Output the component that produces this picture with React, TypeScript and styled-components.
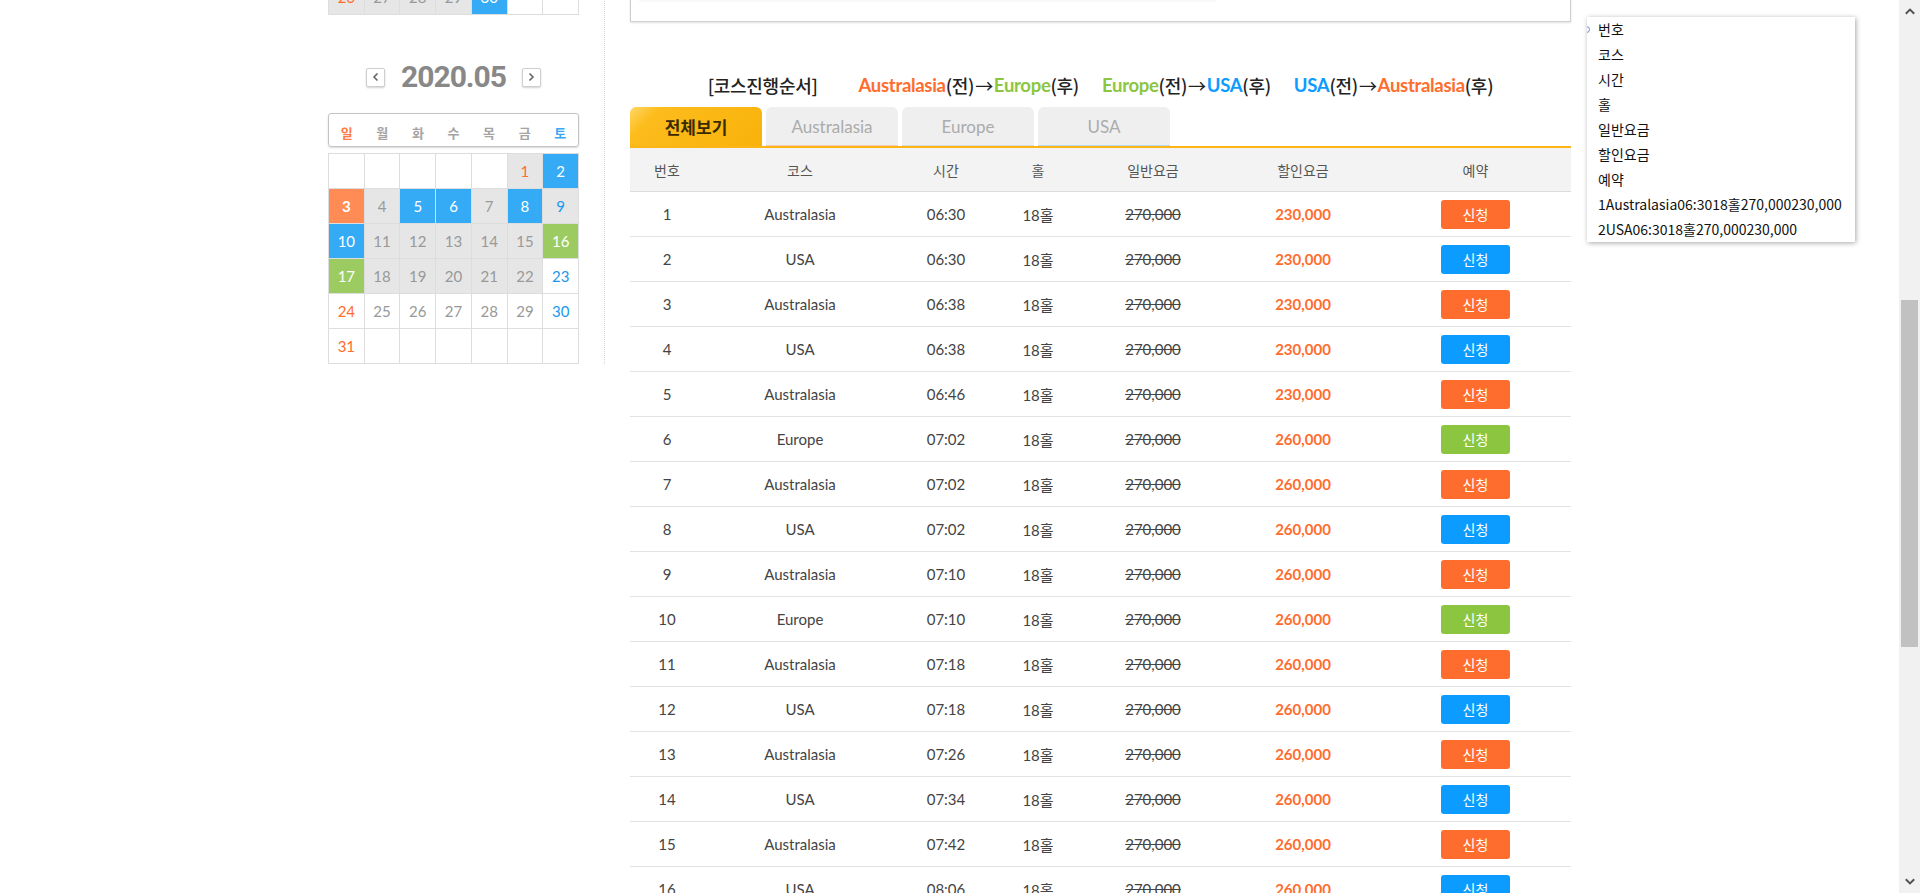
import React from 'react'
import styled, { createGlobalStyle, css } from 'styled-components'

const GlobalStyle = createGlobalStyle`
  html, body {
    margin: 0;
    padding: 0;
    background: #fff;
    overflow: hidden;
  }
  body {
    font-family: Lato, "Noto Sans CJK KR", sans-serif;
    color: #333;
  }
`

const KR = `"Noto Sans CJK KR", "Noto Sans", sans-serif`

type Bg = 'white' | 'gray' | 'blue' | 'orange' | 'green'
type Tone = 'sun' | 'sat' | 'muted' | 'light'
type Course = 'Australasia' | 'USA' | 'Europe'

const bgColors: Record<Bg, string> = {
  white: '#fff',
  gray: '#e6e6e6',
  blue: '#35abf6',
  orange: '#ff8b55',
  green: '#9ccb62',
}

const toneColors: Record<Tone, string> = {
  sun: '#ff6c2c',
  sat: '#1a98f0',
  muted: '#999',
  light: '#fff',
}

const courseColors: Record<Course, string> = {
  Australasia: '#ff6d2e',
  USA: '#0c9cff',
  Europe: '#8cc640',
}

const S = {
  Screen: styled.div`
    display: flex;
    height: 893px;
    overflow: hidden;
  `,

  Viewport: styled.div`
    flex: 1;
    position: relative;
    overflow: hidden;
  `,

  Container: styled.div`
    width: 1243px;
    margin: -21px auto 0;
    display: flex;
    align-items: flex-start;
  `,

  LeftCol: styled.div`
    width: 251px;
    padding-right: 25px;
    border-right: 1px dotted #d4d4d4;
  `,

  CalGrid: styled.div`
    display: grid;
    grid-template-columns: repeat(7, 1fr);
    grid-auto-rows: 34px;
    gap: 1px;
    background: #ddd;
    border: 1px solid #ddd;
  `,

  Cell: styled.div<{ $bg: Bg; $tone: Tone; $bold?: boolean }>`
    display: flex;
    align-items: center;
    justify-content: center;
    background: ${p => bgColors[p.$bg]};
    color: ${p => toneColors[p.$tone]};
    font-family: Lato, sans-serif;
    font-size: 15px;
    font-weight: ${p => (p.$bold ? 700 : 400)};
  `,

  MonthNav: styled.div`
    margin-top: 47px;
    height: 30px;
    display: flex;
    align-items: center;
    justify-content: center;
    gap: 16px;
  `,

  NavBtn: styled.div`
    width: 17px;
    height: 17px;
    border: 1px solid #cfcfcf;
    border-radius: 2px;
    background: #fff;
    box-shadow: 0 1px 2px rgba(0, 0, 0, 0.18);
    display: flex;
    align-items: center;
    justify-content: center;
  `,

  MonthTitle: styled.div`
    font-family: Roboto, sans-serif;
    font-weight: 700;
    font-size: 30px;
    letter-spacing: -1px;
    color: #888;
    line-height: 30px;
  `,

  WeekHead: styled.div`
    margin-top: 21px;
    margin-bottom: 6px;
    height: 34px;
    box-sizing: border-box;
    padding-top: 4px;
    border: 1px solid #c4c4c4;
    border-radius: 3px;
    box-shadow: 0 1px 2px rgba(0, 0, 0, 0.15);
    display: grid;
    grid-template-columns: repeat(7, 1fr);
    align-items: center;
  `,

  WeekDay: styled.div<{ $tone: Tone }>`
    text-align: center;
    font-family: ${KR};
    font-size: 13px;
    font-weight: 700;
    color: ${p => (p.$tone === 'sun' ? '#ff7a45' : p.$tone === 'sat' ? '#3aa8f4' : '#a4a4a4')};
  `,

  RightCol: styled.div`
    width: 941px;
    margin-left: 25px;
  `,

  TopBox: styled.div`
    height: 43px;
    box-sizing: border-box;
    border: 1px solid #cfcfcf;
    border-top: none;
    box-shadow: 0 1px 2px rgba(0, 0, 0, 0.12);
    padding: 0 0 0 8px;
  `,

  TopInner: styled.div`
    width: 577px;
    height: 20px;
    box-shadow: 0 2px 3px rgba(0, 0, 0, 0.05);
  `,

  OrderLine: styled.div`
    margin-top: 50px;
    height: 26px;
    display: flex;
    justify-content: center;
    align-items: center;
    gap: 23px;
    font-family: ${KR};
    font-size: 18px;
    font-weight: 500;
    letter-spacing: -0.3px;
    color: #222;
    white-space: nowrap;
  `,

  OrderTitle: styled.span`
    margin-right: 18px;
  `,

  Flow: styled.span`
    display: inline-flex;
    align-items: center;
  `,

  CourseName: styled.b<{ $course: Course }>`
    font-family: Lato, sans-serif;
    font-weight: 700;
    font-size: 18.5px;
    letter-spacing: -0.3px;
    color: ${p => courseColors[p.$course]};
  `,

  Arrow: styled.span`
    margin: 0 1px;
    font-weight: 400;
  `,

  Tabs: styled.div`
    margin-top: 9px;
    display: flex;
    gap: 4px;
    border-bottom: 2px solid #fdb515;
  `,

  Tab: styled.div<{ $active?: boolean; $accent?: string }>`
    width: 132px;
    height: 39px;
    box-sizing: border-box;
    border-radius: 6px 6px 0 0;
    display: flex;
    align-items: center;
    justify-content: center;
    font-size: 17px;
    ${p =>
      p.$active
        ? css`
            background: linear-gradient(135deg, #ffd866 0%, #fcbc1c 18%, #f9b20a 100%);
            color: #3a2a00;
            font-family: ${KR};
            font-weight: 700;
          `
        : css`
            background: #efefef;
            color: #ababab;
            font-family: Lato, sans-serif;
            border-bottom: 1px solid ${p.$accent || '#e0e0e0'};
          `}
  `,

  HeadRow: styled.div`
    display: grid;
    grid-template-columns: 74px 192px 100px 84px 146px 154px 1fr;
    height: 44px;
    box-sizing: border-box;
    align-items: center;
    background: #f3f3f3;
    border-bottom: 1px solid #dcdcdc;
    font-family: ${KR};
    font-size: 14px;
    color: #555;
    text-align: center;
  `,

  Row: styled.div`
    display: grid;
    grid-template-columns: 74px 192px 100px 84px 146px 154px 1fr;
    height: 45px;
    box-sizing: border-box;
    align-items: center;
    border-bottom: 1px solid #e2e2e2;
    font-family: Lato, ${KR};
    font-size: 15px;
    color: #444;
    text-align: center;
  `,

  Hole: styled.span`
    font-family: Lato, ${KR};
  `,

  OldPrice: styled.span`
    text-decoration: line-through;
  `,

  Price: styled.span`
    color: #ff6d2e;
    font-weight: 700;
  `,

  BookCell: styled.div`
    display: flex;
    justify-content: center;
  `,

  BookBtn: styled.div<{ $course: Course }>`
    width: 69px;
    height: 29px;
    border-radius: 3px;
    background: ${p => courseColors[p.$course]};
    color: #fff;
    font-family: ${KR};
    font-size: 14px;
    display: flex;
    align-items: center;
    justify-content: center;
  `,

  Popup: styled.div`
    position: absolute;
    left: 1587px;
    top: 17px;
    width: 268px;
    background: #fff;
    box-shadow: 1px 1px 5px rgba(0, 0, 0, 0.35);
    font-family: ${KR};
    font-size: 14px;
    color: #111;
    overflow: hidden;
  `,

  PopItem: styled.div<{ $marker?: boolean }>`
    position: relative;
    height: 25px;
    line-height: 25px;
    padding-left: 11px;
    white-space: nowrap;
    ${p =>
      p.$marker &&
      css`
        &::before {
          content: '';
          position: absolute;
          left: -4px;
          top: 9px;
          width: 5px;
          height: 5px;
          border: 1px solid #6b86d8;
          border-radius: 50%;
        }
      `}
  `,

  ScrollBar: styled.div`
    width: 21px;
    background: #f1f1f1;
    display: flex;
    flex-direction: column;
    align-items: center;
  `,

  ScrollArrow: styled.div`
    height: 24px;
    display: flex;
    align-items: center;
    justify-content: center;
  `,

  ScrollTrack: styled.div`
    flex: 1;
    width: 100%;
    padding: 276px 2px 0;
    box-sizing: border-box;
  `,

  Thumb: styled.div`
    height: 347px;
    background: #c1c1c1;
  `,
}

type Day = { d: number; bg: Bg; tone?: Tone; bold?: boolean } | null

const g = (d: number, tone: Tone = 'muted'): Day => ({ d, bg: 'gray', tone })
const w = (d: number, tone: Tone = 'muted'): Day => ({ d, bg: 'white', tone })
const c = (d: number, bg: Bg, bold = false): Day => ({ d, bg, tone: 'light', bold })

const aprilTail: Day[] = [g(26, 'sun'), g(27), g(28), g(29), c(30, 'blue'), null, null]

const may: Day[] = [
  null, null, null, null, null, g(1, 'sun'), c(2, 'blue'),
  c(3, 'orange', true), g(4), c(5, 'blue'), c(6, 'blue'), g(7), c(8, 'blue'), g(9, 'sat'),
  c(10, 'blue'), g(11), g(12), g(13), g(14), g(15), c(16, 'green'),
  c(17, 'green'), g(18), g(19), g(20), g(21), g(22), w(23, 'sat'),
  w(24, 'sun'), w(25), w(26), w(27), w(28), w(29), w(30, 'sat'),
  w(31, 'sun'), null, null, null, null, null, null,
]

const weekDays: { label: string; tone: Tone }[] = [
  { label: '일', tone: 'sun' },
  { label: '월', tone: 'muted' },
  { label: '화', tone: 'muted' },
  { label: '수', tone: 'muted' },
  { label: '목', tone: 'muted' },
  { label: '금', tone: 'muted' },
  { label: '토', tone: 'sat' },
]

const tee: [Course, string, string][] = [
  ['Australasia', '06:30', '230,000'],
  ['USA', '06:30', '230,000'],
  ['Australasia', '06:38', '230,000'],
  ['USA', '06:38', '230,000'],
  ['Australasia', '06:46', '230,000'],
  ['Europe', '07:02', '260,000'],
  ['Australasia', '07:02', '260,000'],
  ['USA', '07:02', '260,000'],
  ['Australasia', '07:10', '260,000'],
  ['Europe', '07:10', '260,000'],
  ['Australasia', '07:18', '260,000'],
  ['USA', '07:18', '260,000'],
  ['Australasia', '07:26', '260,000'],
  ['USA', '07:34', '260,000'],
  ['Australasia', '07:42', '260,000'],
  ['USA', '08:06', '260,000'],
  ['Australasia', '08:14', '260,000'],
  ['Europe', '08:22', '260,000'],
]

const headers = ['번호', '코스', '시간', '홀', '일반요금', '할인요금', '예약']

const popItems = [
  ...headers,
  '1Australasia06:3018홀270,000230,000',
  '2USA06:3018홀270,000230,000',
]

const Chevron = ({ dir, size = 10, color = '#666' }: { dir: 'left' | 'right' | 'up' | 'down'; size?: number; color?: string }) => {
  const paths = {
    left: 'M6.5 1.5 L3 5 L6.5 8.5',
    right: 'M3.5 1.5 L7 5 L3.5 8.5',
    up: 'M1.5 6.5 L5 3 L8.5 6.5',
    down: 'M1.5 3.5 L5 7 L8.5 3.5',
  }
  return (
    <svg width={size} height={size} viewBox="0 0 10 10">
      <path d={paths[dir]} fill="none" stroke={color} strokeWidth="1.6" />
    </svg>
  )
}

const CalCells = ({ days }: { days: Day[] }) => (
  <S.CalGrid>
    {days.map((day, i) =>
      day ? (
        <S.Cell key={i} $bg={day.bg} $tone={day.tone || 'muted'} $bold={day.bold}>
          {day.d}
        </S.Cell>
      ) : (
        <S.Cell key={i} $bg="white" $tone="muted" />
      )
    )}
  </S.CalGrid>
)

const Flow = ({ from, to }: { from: Course; to: Course }) => (
  <S.Flow>
    <S.CourseName $course={from}>{from}</S.CourseName>(전)
    <S.Arrow>→</S.Arrow>
    <S.CourseName $course={to}>{to}</S.CourseName>(후)
  </S.Flow>
)

const App = () => {
  return (
    <S.Screen>
      <GlobalStyle />
      <S.Viewport>
        <S.Container>
          <S.LeftCol>
            <CalCells days={aprilTail} />
            <S.MonthNav>
              <S.NavBtn>
                <Chevron dir="left" />
              </S.NavBtn>
              <S.MonthTitle>2020.05</S.MonthTitle>
              <S.NavBtn>
                <Chevron dir="right" />
              </S.NavBtn>
            </S.MonthNav>
            <S.WeekHead>
              {weekDays.map(d => (
                <S.WeekDay key={d.label} $tone={d.tone}>
                  {d.label}
                </S.WeekDay>
              ))}
            </S.WeekHead>
            <CalCells days={may} />
          </S.LeftCol>

          <S.RightCol>
            <S.TopBox>
              <S.TopInner />
            </S.TopBox>

            <S.OrderLine>
              <S.OrderTitle>[코스진행순서]</S.OrderTitle>
              <Flow from="Australasia" to="Europe" />
              <Flow from="Europe" to="USA" />
              <Flow from="USA" to="Australasia" />
            </S.OrderLine>

            <S.Tabs>
              <S.Tab $active>전체보기</S.Tab>
              <S.Tab $accent="#f6c9b8">Australasia</S.Tab>
              <S.Tab $accent="#d9d9d9">Europe</S.Tab>
              <S.Tab $accent="#b7d9f2">USA</S.Tab>
            </S.Tabs>

            <S.HeadRow>
              {headers.map(h => (
                <div key={h}>{h}</div>
              ))}
            </S.HeadRow>

            {tee.map(([course, time, price], i) => (
              <S.Row key={i}>
                <div>{i + 1}</div>
                <div>{course}</div>
                <div>{time}</div>
                <S.Hole>18홀</S.Hole>
                <div>
                  <S.OldPrice>270,000</S.OldPrice>
                </div>
                <div>
                  <S.Price>{price}</S.Price>
                </div>
                <S.BookCell>
                  <S.BookBtn $course={course}>신청</S.BookBtn>
                </S.BookCell>
              </S.Row>
            ))}
          </S.RightCol>
        </S.Container>

        <S.Popup>
          {popItems.map((item, i) => (
            <S.PopItem key={i} $marker={i === 0}>
              {item}
            </S.PopItem>
          ))}
        </S.Popup>
      </S.Viewport>

      <S.ScrollBar>
        <S.ScrollArrow>
          <Chevron dir="up" size={12} color="#505050" />
        </S.ScrollArrow>
        <S.ScrollTrack>
          <S.Thumb />
        </S.ScrollTrack>
        <S.ScrollArrow>
          <Chevron dir="down" size={12} color="#505050" />
        </S.ScrollArrow>
      </S.ScrollBar>
    </S.Screen>
  )
}

export default App
